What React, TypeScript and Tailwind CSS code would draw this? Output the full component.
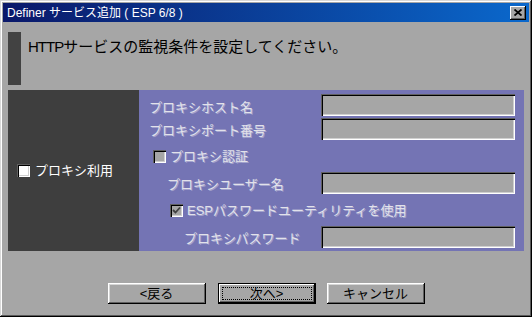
import React from 'react';

const sunken =
  'shadow-[inset_1px_1px_0_#606060,inset_2px_2px_0_#000,inset_-1px_-1px_0_#fff,inset_-2px_-2px_0_#cfcfcf]';

function Field() {
  return <div className={`ml-auto h-[22px] w-[194px] bg-[#a6a6a6] ${sunken}`} />;
}

function CheckBox({ checked, white }: { checked?: boolean; white?: boolean }) {
  return (
    <div className={`relative h-[13px] w-[13px] shrink-0 ${white ? 'bg-white' : 'bg-[#a6a6a6]'} ${sunken}`}>
      {checked && (
        <svg className="absolute inset-0" width="13" height="13" viewBox="0 0 13 13">
          <path d="M3 6 L5.5 8.5 L10 3.5" fill="none" stroke="#404040" strokeWidth="1.8" />
        </svg>
      )}
    </div>
  );
}

function Label({ children, className = '' }: { children: React.ReactNode; className?: string }) {
  return (
    <span className={`text-[13px] leading-none text-[#e2e2ea] [text-shadow:1px_1px_0_rgba(255,255,255,0.35)] ${className}`}>
      {children}
    </span>
  );
}

function Button({ children, isDefault }: { children: React.ReactNode; isDefault?: boolean }) {
  if (isDefault) {
    return (
      <div className="h-[21px] w-[98px] border border-black bg-[#a6a6a6]">
        <div className="flex h-full w-full items-center justify-center p-[3px] shadow-[inset_-1px_-1px_0_#000,inset_1px_1px_0_#fff,inset_-2px_-2px_0_#606060]">
          <div className="flex h-full w-full items-center justify-center border border-dotted border-black text-[13px] leading-none text-black">
            {children}
          </div>
        </div>
      </div>
    );
  }
  return (
    <div className="flex h-[21px] w-[98px] items-center justify-center bg-[#a6a6a6] text-[13px] leading-none text-black shadow-[inset_-1px_-1px_0_#000,inset_1px_1px_0_#fff,inset_-2px_-2px_0_#606060,inset_2px_2px_0_#d6d6d6]">
      {children}
    </div>
  );
}

export default function App() {
  return (
    <div className="flex h-[317px] w-[532px] flex-col bg-[#a6a6a6] p-[3px] font-['Liberation_Sans','Noto_Sans_CJK_JP',sans-serif] shadow-[inset_-1px_-1px_0_#000,inset_1px_1px_0_#d8d8d8,inset_-2px_-2px_0_#5a5a5a,inset_2px_2px_0_#fff]">
      <div className="flex h-[19px] items-center bg-linear-to-r from-[#0a186a] to-[#0a68cc] pl-[4px] pr-[3px]">
        <span className="text-[12px] leading-none text-white">Definer サービス追加 ( ESP 6/8 )</span>
        <div className="ml-auto flex h-[14px] w-[16px] items-center justify-center bg-[#a6a6a6] shadow-[inset_-1px_-1px_0_#000,inset_1px_1px_0_#fff,inset_-2px_-2px_0_#606060]">
          <svg width="8" height="7" viewBox="0 0 8 7">
            <path d="M0.5 0.5 L7.5 6.5 M7.5 0.5 L0.5 6.5" stroke="#000" strokeWidth="1.8" />
          </svg>
        </div>
      </div>

      <div className="flex flex-1 flex-col px-[5px]">
        <div className="mt-[10px] flex h-[53px]">
          <div className="w-[13px] bg-[#424242]" />
          <p className="ml-[7px] mt-[5px] text-[15px] leading-[20px] text-black">
            <span className="tracking-[-1px]">HTTP</span>
            サービスの監視条件を設定してください。
          </p>
        </div>

        <div className="mt-[5px] flex h-[161px]">
          <div className="flex w-[131px] items-center gap-[5px] bg-[#3e3e3e] pl-[9px]">
            <CheckBox white />
            <span className="text-[13px] leading-none text-white">プロキシ利用</span>
          </div>

          <div className="flex flex-1 flex-col bg-[#7474b4] pl-[10px] pr-[9px] pt-[4px]">
            <div className="flex h-[22px] items-center">
              <Label className="mt-[4px]">プロキシホスト名</Label>
              <Field />
            </div>
            <div className="mt-[2px] flex h-[22px] items-center">
              <Label className="mt-[3px]">プロキシポート番号</Label>
              <Field />
            </div>
            <div className="flex h-[32px] items-center gap-[4px] pl-[4px]">
              <CheckBox />
              <Label>プロキシ認証</Label>
            </div>
            <div className="flex h-[22px] items-center pl-[18px]">
              <Label className="mt-[2px]">プロキシユーザー名</Label>
              <Field />
            </div>
            <div className="flex h-[32px] items-center gap-[4px] pl-[21px]">
              <CheckBox checked />
              <Label>ESPパスワードユーティリティを使用</Label>
            </div>
            <div className="flex h-[22px] items-center pl-[35px]">
              <Label className="mt-[2px]">プロキシパスワード</Label>
              <Field />
            </div>
          </div>
        </div>

        <div className="mt-[32px] flex justify-center">
          <Button>&lt;戻る</Button>
          <div className="ml-[12px]">
            <Button isDefault>次へ&gt;</Button>
          </div>
          <div className="ml-[11px]">
            <Button>キャンセル</Button>
          </div>
        </div>
      </div>
    </div>
  );
}
